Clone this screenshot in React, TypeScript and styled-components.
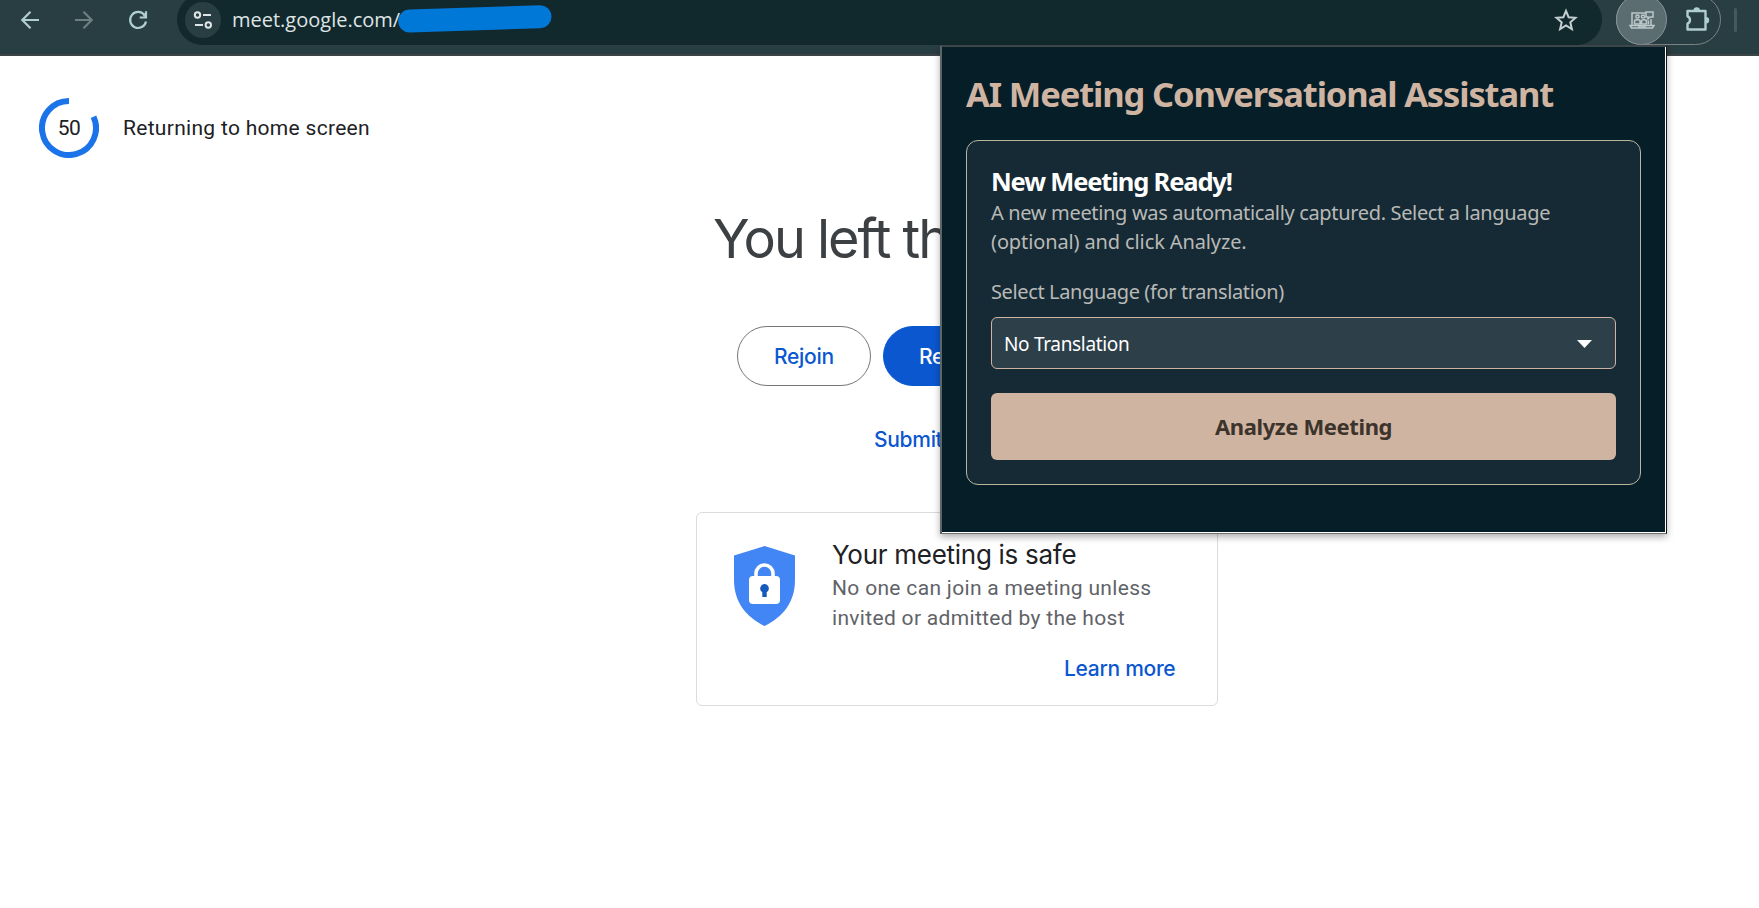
import React from 'react';
import styled, { createGlobalStyle } from 'styled-components';

const GlobalStyle = createGlobalStyle`
  *, *::before, *::after { box-sizing: border-box; }
  body { margin: 0; background: #fff; }
  h1, h2, p { margin: 0; font-weight: 400; }
  button { font: inherit; margin: 0; cursor: pointer; }
`;

const roboto = `Roboto, sans-serif`;
const product = `Inter, sans-serif`;
const humanist = `'Noto Sans', sans-serif`;

const Window = styled.div`
  position: relative;
  width: 1759px;
  height: 908px;
  overflow: hidden;
  background: #fff;
`;

/* ---------- browser toolbar ---------- */

const Toolbar = styled.header`
  display: flex;
  align-items: flex-start;
  height: 56px;
  background: #293e43;
  border-bottom: 2px solid #3d4447;
  overflow: hidden;
`;

const NavButtons = styled.nav`
  display: flex;
  align-items: center;
  gap: 36px;
  height: 40px;
  width: 177px;
  padding-left: 21px;
`;

const NavIcon = styled.svg<{ $dim?: boolean }>`
  flex: none;
  width: 18px;
  height: 18px;
  overflow: visible;
  fill: none;
  stroke: ${(p) => (p.$dim ? '#6c7f82' : '#b0cdd1')};
  stroke-width: 2.2;
`;

const AddressBar = styled.div`
  display: flex;
  align-items: center;
  width: 1425px;
  height: 51px;
  margin-top: -6px;
  padding: 0 24px 0 8px;
  border-radius: 26px;
  background: #11282c;
`;

const SiteInfo = styled.span`
  display: grid;
  place-items: center;
  width: 36px;
  height: 36px;
  margin-right: 11px;
  border-radius: 50%;
  background: #293e43;
`;

const Url = styled.span`
  width: 166px;
  font: 400 20px/26px 'Open Sans', sans-serif;
  white-space: nowrap;
  color: #dfe5e5;
`;

const Redaction = styled.svg`
  width: 154px;
  height: 30px;
  margin-top: -1px;
  position: relative;
`;

const StarIcon = styled.svg`
  width: 24px;
  height: 24px;
  margin-left: auto;
`;

const ExtensionPill = styled.div`
  display: flex;
  align-items: center;
  width: 105px;
  height: 51px;
  margin: -6px 0 0 14px;
  border: 1.5px solid #7c8385;
  border-radius: 26px;
`;

const ActiveExtension = styled.span`
  display: grid;
  place-items: center;
  width: 51px;
  height: 51px;
  margin-left: -1px;
  border-radius: 50%;
  border: 1px solid #89969a;
  background: #5b6d71;
`;

const PuzzleIcon = styled.svg`
  width: 26px;
  height: 26px;
  margin: -1px 0 0 17px;
`;

const Divider = styled.span`
  width: 3px;
  height: 24px;
  margin: 8px 0 0 13px;
  border-radius: 2px;
  background: #425a5e;
`;

/* ---------- call-ended page ---------- */

const Page = styled.main`
  display: flex;
  flex-direction: column;
`;

const Countdown = styled.div`
  display: flex;
  align-items: center;
  gap: 24px;
  padding: 42px 0 0 39px;
  font: 400 21px/30px ${roboto};
  letter-spacing: 0.3px;
  color: #202124;
`;

const Dial = styled.div`
  display: grid;
  width: 60px;
  height: 60px;
  place-items: center;
  letter-spacing: -0.5px;
  > * { grid-area: 1 / 1; }
`;

const Content = styled.section`
  display: flex;
  flex-direction: column;
  align-items: center;
  width: 522px;
  margin-left: 696px;
`;

const Heading = styled.h1`
  width: 488px;
  margin-top: 45px;
  font: 400 54px/72px ${product};
  letter-spacing: -2px;
  white-space: nowrap;
  color: #3c4043;
`;

const Actions = styled.div`
  display: flex;
  gap: 12px;
  margin-top: 51px;
`;

const PillButton = styled.button<{ $filled?: boolean }>`
  width: ${(p) => (p.$filled ? 294 : 134)}px;
  height: 60px;
  padding: 1px 0 0 ${(p) => (p.$filled ? 35 : 36)}px;
  text-align: left;
  border: 1px solid ${(p) => (p.$filled ? '#0b57d0' : '#747775')};
  border-radius: 30px;
  background: ${(p) => (p.$filled ? '#0b57d0' : '#fff')};
  color: ${(p) => (p.$filled ? '#fff' : '#0b57d0')};
  font: 500 21px/30px ${product};
  letter-spacing: -0.3px;
  white-space: nowrap;
`;

const TextLink = styled.a`
  font: 500 21px/30px ${product};
  letter-spacing: -0.3px;
  white-space: nowrap;
  color: #0b57d0;
`;

const FeedbackLink = styled(TextLink)`
  width: 166px;
  margin-top: 39px;
`;

const SafetyCard = styled.article`
  display: flex;
  width: 522px;
  height: 194px;
  margin-top: 57px;
  padding: 24px 36px 0 37px;
  border: 1px solid #dadce0;
  border-radius: 6px;
`;

const Shield = styled.svg`
  flex: none;
  width: 61px;
  height: 80px;
  margin: 9px 37px 0 0;
`;

const SafetyBody = styled.div`
  display: flex;
  flex-direction: column;
  flex: 1;
`;

const SafetyTitle = styled.h2`
  font: 400 26px/36px ${product};
  letter-spacing: -0.28px;
  white-space: nowrap;
  color: #202124;
`;

const SafetyText = styled.p`
  font: 400 21px/30px ${roboto};
  letter-spacing: 0.32px;
  white-space: nowrap;
  color: #5f6368;
`;

const LearnMore = styled(TextLink)`
  width: 116px;
  margin: 21px 0 0 232px;
`;

/* ---------- extension popup ---------- */

const Popup = styled.aside`
  position: absolute;
  left: 940px;
  top: 45px;
  width: 727px;
  height: 489px;
  padding: 0 24px;
  border-style: solid;
  border-width: 2px 1px 1px 2px;
  border-color: #3c4648 #141414 #70726f #5b6466;
  background: #061e28;
  box-shadow: inset -1px -1px 0 #fff, 0 3px 7px rgba(0, 0, 0, 0.32);
  font-family: ${humanist};
`;

const PopupTitle = styled.h1`
  padding-top: 22px;
  font-size: 34.5px;
  line-height: 50px;
  font-weight: 700;
  letter-spacing: -1.13px;
  white-space: nowrap;
  color: #d0b4a2;
`;

const Panel = styled.section`
  display: flex;
  flex-direction: column;
  width: 675px;
  height: 345px;
  margin-top: 21px;
  padding: 23px 24px 24px;
  border: 1px solid #b9b69e;
  border-radius: 12px;
  background: #152a34;
`;

const PanelTitle = styled.h2`
  font-size: 25.5px;
  line-height: 34px;
  font-weight: 700;
  letter-spacing: -1.15px;
  white-space: nowrap;
  color: #fff;
`;

const PanelText = styled.p`
  font-size: 20px;
  line-height: 29px;
  white-space: nowrap;
  color: #b9b9b7;
`;

const TextLine = styled.span<{ $tracking: number }>`
  display: block;
  letter-spacing: ${(p) => p.$tracking}px;
`;

const FieldLabel = styled.label`
  margin-top: 21px;
  font-size: 20px;
  line-height: 29px;
  letter-spacing: -0.38px;
  white-space: nowrap;
  color: #b9b9b7;
`;

const Select = styled.div`
  display: flex;
  align-items: center;
  justify-content: space-between;
  height: 52px;
  margin-top: 11px;
  padding: 1px 23px 0 12px;
  border: 1px solid #d0b4a2;
  border-radius: 6px;
  background: #2d404a;
  color: #fff;
  font-size: 19px;
  line-height: 28px;
  letter-spacing: -0.33px;
`;

const AnalyzeButton = styled.button`
  height: 67px;
  margin-top: 24px;
  padding: 0 0 2px;
  border: 0;
  border-radius: 6px;
  background: #d0b4a2;
  color: #3c332b;
  font: 700 22px/30px ${humanist};
  letter-spacing: -0.38px;
`;

export default function App() {
  return (
    <>
      <GlobalStyle />
      <Window>
        <Toolbar>
          <NavButtons>
            <NavIcon viewBox="0 0 18 18">
              <path d="M18 9H1.5M9.5.8 1.3 9l8.2 8.2" />
            </NavIcon>
            <NavIcon viewBox="0 0 18 18" $dim>
              <path d="M0 9h16.500M8.500.8 16.700 9l-8.200 8.200" />
            </NavIcon>
            <NavIcon viewBox="0 0 18 18">
              <path d="M15.600 4.200A8 8 0 1 0 17 10.500M17 .2v6.300h-6.300M14.500 5l2.500-2.500" />
            </NavIcon>
          </NavButtons>
          <AddressBar>
            <SiteInfo>
              <svg width="20" height="18" viewBox="0 0 20 18" fill="none" stroke="#dfe5e5" strokeWidth="2">
                <circle cx="4.500" cy="4" r="2.700" />
                <path d="M10 4h8M2 14h8" />
                <circle cx="15.300" cy="14" r="2.700" />
              </svg>
            </SiteInfo>
            <Url>meet.google.com/</Url>
            <Redaction viewBox="0 0 154 30">
              <path d="M11.700 17 142 12.700" stroke="#0078d7" strokeWidth="23" strokeLinecap="round" />
            </Redaction>
            <StarIcon viewBox="0 0 24 24" fill="none" stroke="#c3cfd0" strokeWidth="2">
              <path d="m12 2.800 2.600 6.400 6.900.6-5.200 4.500 1.600 6.800L12 17.500l-5.900 3.600 1.600-6.800-5.200-4.500 6.900-.6z" />
            </StarIcon>
          </AddressBar>
          <ExtensionPill>
            <ActiveExtension>
              <svg width="26" height="18" viewBox="0 0 26 18" fill="none" stroke="#bdc8ca" strokeWidth="1.500">
                <path d="M3 14V2h14M22 8v6M1 14.500h24l-1.500 2.400h-21z" />
                <path d="M17 1h7v5h-3l-2 2V6h-2zM10 14.500v1.400h6v-1.400" />
                <circle cx="8.500" cy="5.500" r="1.600" />
                <circle cx="14" cy="5.500" r="1.600" />
                <path d="M5.500 13v-2.500q0-1.800 1.800-1.800h2q1.800 0 1.800 1.800V13zM12.500 13v-2.500q0-1.800 1.800-1.800h1.400q1.800 0 1.800 1.800V13zM19.500 9.500v4" />
              </svg>
            </ActiveExtension>
            <PuzzleIcon viewBox="0 0 26 26">
              <path
                d="M3.500 5h18v18.500h-18v-5.800a4 4 0 0 0 0-7.400z"
                fill="none"
                stroke="#b0cdd1"
                strokeWidth="2.400"
                strokeLinejoin="round"
              />
              <path d="M9.500 4.500a3.200 3.200 0 0 1 6.400 0zM22 11a3.200 3.200 0 0 1 0 6.400z" fill="#b0cdd1" />
            </PuzzleIcon>
          </ExtensionPill>
          <Divider />
        </Toolbar>

        <Page>
          <Countdown>
            <Dial>
              <svg width="60" height="60" viewBox="0 0 60 60" fill="none" stroke="#1a73e8" strokeWidth="6">
                <path d="M30 3A27 27 0 1 0 54.500 18.700" />
              </svg>
              <span>50</span>
            </Dial>
            <span>Returning to home screen</span>
          </Countdown>

          <Content>
            <Heading>You left the meeting</Heading>
            <Actions>
              <PillButton>Rejoin</PillButton>
              <PillButton $filled>Return to home screen</PillButton>
            </Actions>
            <FeedbackLink>Submit feedback</FeedbackLink>
            <SafetyCard>
              <Shield viewBox="0 0 61 80">
                <path d="M30.500 0 61 9.500V34C61 56 49 71 30.500 80 12 71 0 56 0 34V9.500z" fill="#4285f4" />
                <path d="M22 32V27.500a8.500 8.500 0 0 1 17 0V32" fill="none" stroke="#fff" strokeWidth="3.600" />
                <rect x="15" y="30" width="31" height="28" rx="4" fill="#fff" />
                <path d="M30.500 38a4.500 4.500 0 0 1 2.200 8.300V51h-4.400v-4.700a4.500 4.500 0 0 1 2.200-8.300z" fill="#185abc" />
              </Shield>
              <SafetyBody>
                <SafetyTitle>Your meeting is safe</SafetyTitle>
                <SafetyText>
                  No one can join a meeting unless
                  <br />
                  invited or admitted by the host
                </SafetyText>
                <LearnMore>Learn more</LearnMore>
              </SafetyBody>
            </SafetyCard>
          </Content>
        </Page>

        <Popup>
          <PopupTitle>AI Meeting Conversational Assistant</PopupTitle>
          <Panel>
            <PanelTitle>New Meeting Ready!</PanelTitle>
            <PanelText>
              <TextLine $tracking={-0.34}>A new meeting was automatically captured. Select a language</TextLine>
              <TextLine $tracking={-0.12}>(optional) and click Analyze.</TextLine>
            </PanelText>
            <FieldLabel>Select Language (for translation)</FieldLabel>
            <Select>
              No Translation
              <svg width="15" height="8" viewBox="0 0 15 8" fill="#fff">
                <path d="M0 0h15L7.500 8z" />
              </svg>
            </Select>
            <AnalyzeButton>Analyze Meeting</AnalyzeButton>
          </Panel>
        </Popup>
      </Window>
    </>
  );
}
